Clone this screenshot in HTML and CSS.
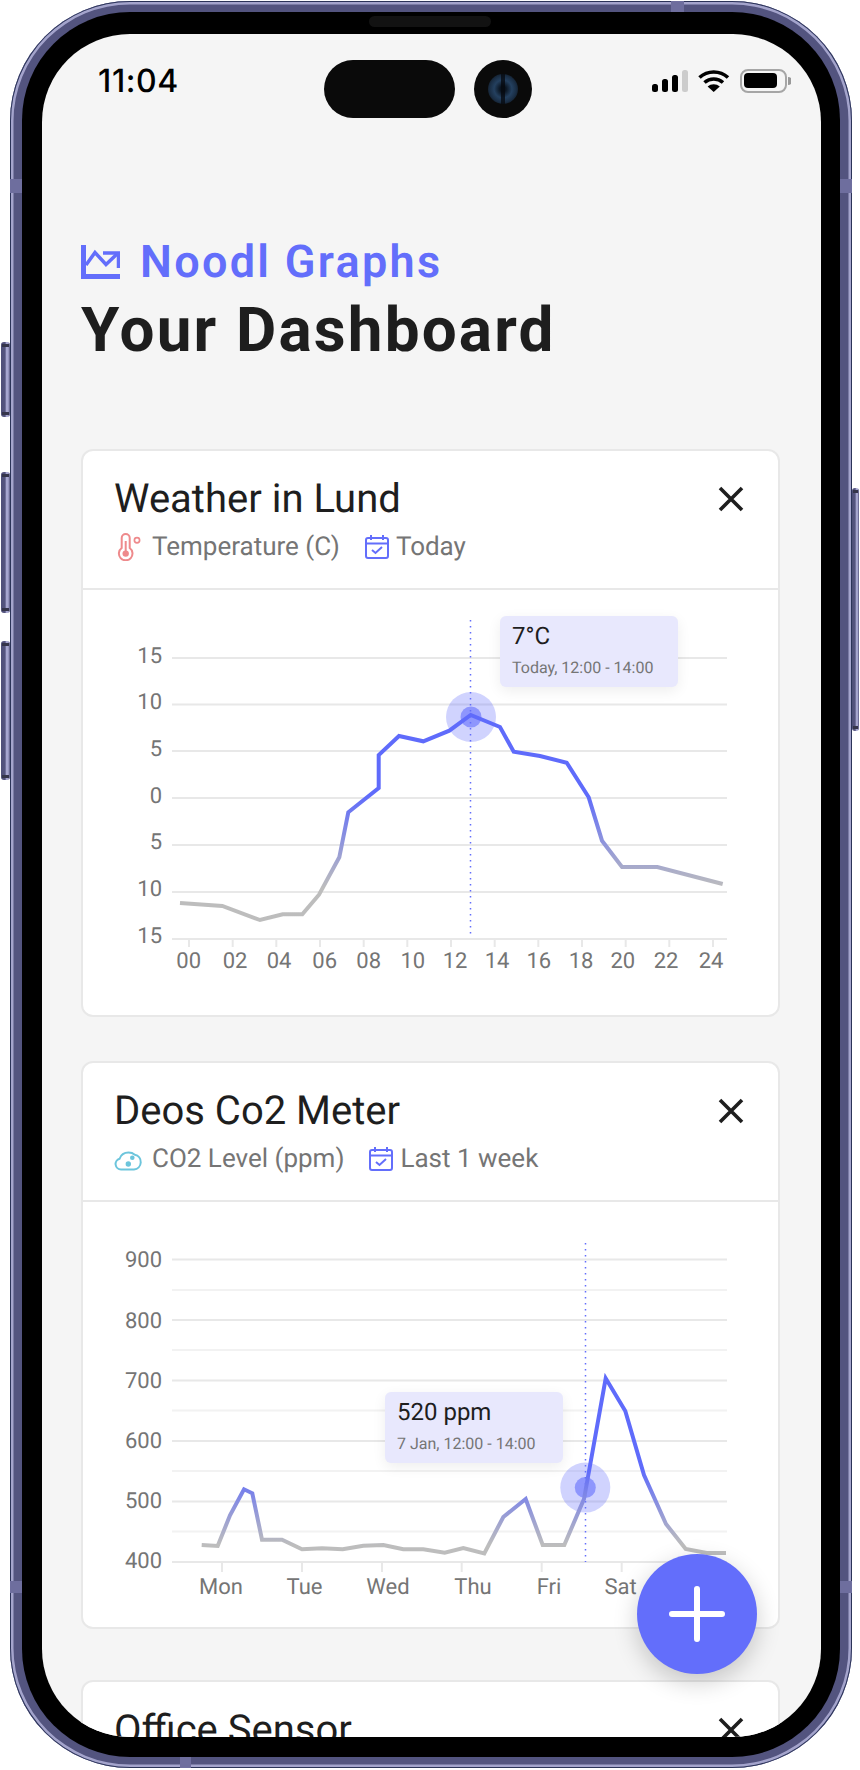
FILE: index.html
```html
<!DOCTYPE html>
<html lang="en">
<head>
<meta charset="utf-8">
<title>Noodl Graphs</title>
<link rel="stylesheet" href="styles.css">
</head>
<body>
<div class="phone">
  <span class="btn btn-mute"></span>
  <span class="btn btn-up"></span>
  <span class="btn btn-down"></span>
  <span class="btn btn-power"></span>
  <span class="band band-lt"></span>
  <span class="band band-rt"></span>
  <span class="band band-lb"></span>
  <span class="band band-rb"></span>
  <span class="band band-top"></span>
  <span class="band band-bottom"></span>
  <div class="bezel">
    <span class="speaker"></span>
    <div class="screen">
      <div class="island"><span class="pill"></span><span class="camera"><span class="lens"></span></span></div>
      <div class="status">
        <span class="time">11:04</span>
        <svg class="status-icons" width="139" height="24" viewBox="0 0 139 24">
          <rect x="0" y="15" width="6" height="8" rx="2.5" fill="#000"/>
          <rect x="10" y="10" width="6" height="13" rx="2.5" fill="#000"/>
          <rect x="20" y="6" width="6" height="17" rx="2.5" fill="#000"/>
          <rect x="30" y="1" width="6" height="22" rx="2.5" fill="#ccc"/>
          <path d="M47.5 8.5A21 21 0 0 1 76 8.5" fill="none" stroke="#000" stroke-width="3.6"/>
          <path d="M52.5 13.5A14 14 0 0 1 71 13.5" fill="none" stroke="#000" stroke-width="3.6"/>
          <path d="M61.7 23 55.6 17.6A9 9 0 0 1 67.8 17.6Z" fill="#000"/>
          <rect x="89" y="1" width="45" height="22" rx="7" fill="none" stroke="#a6a6a6" stroke-width="2"/>
          <rect x="92" y="4" width="33" height="15" rx="4" fill="#000"/>
          <path d="M136 8a4 4 0 0 1 0 8Z" fill="#999"/>
        </svg>
      </div>
      <header class="head">
        <div class="brand">
          <svg class="brand-icon" width="39" height="34" viewBox="0 0 39 34">
            <path d="M2.5 0V31.5H39" fill="none" stroke="#636efb" stroke-width="5"/>
            <path d="M5 20 14 7.5 25 19.5 36 9" fill="none" stroke="#636efb" stroke-width="3.5"/>
            <path d="M22 8H37.5V23" fill="none" stroke="#636efb" stroke-width="3.5"/>
          </svg>
          <span class="brand-name">Noodl Graphs</span>
        </div>
        <h1 class="page-title">Your Dashboard</h1>
      </header>

      <section class="card card-one">
        <div class="card-head">
          <div class="title-row">
            <h2 class="card-title">Weather in Lund</h2>
            <svg class="close" width="28" height="28" viewBox="0 0 28 28"><path d="M3 3 25 25M25 3 3 25" stroke="#1e1e1e" stroke-width="3.6" fill="none"/></svg>
          </div>
          <div class="meta">
            <span class="meta-item">
              <svg class="meta-icon" width="28" height="28" viewBox="0 0 28 28">
                <path d="M7.7 15V5a4 4 0 0 1 8 0V15a6.8 6.8 0 1 1-8 0Z" fill="none" stroke="#ee8a8c" stroke-width="2"/>
                <circle cx="11.7" cy="20.6" r="3.2" fill="#ee8a8c"/>
                <path d="M11.7 8V20" stroke="#ee8a8c" stroke-width="2"/>
                <circle cx="23" cy="7.3" r="2.6" fill="none" stroke="#ee8a8c" stroke-width="1.7"/>
              </svg>
              Temperature (C)
            </span>
            <span class="meta-item">
              <svg class="cal-icon" width="24" height="24" viewBox="0 0 24 24">
                <rect x="1" y="3" width="22" height="20" rx="2" fill="none" stroke="#636efb" stroke-width="2"/>
                <path d="M1 8.5H23M6 0V5M18 0V5" fill="none" stroke="#636efb" stroke-width="2"/>
                <path d="M7 15 10.5 18 17 12" fill="none" stroke="#636efb" stroke-width="2"/>
              </svg>
              Today
            </span>
          </div>
        </div>
        <div class="chart chart-one">
          <svg class="plot" width="695" height="426" viewBox="83 590 695 426">
            <defs>
              <linearGradient id="lineA" gradientUnits="userSpaceOnUse" x1="0" y1="795" x2="0" y2="888">
                <stop offset="0" stop-color="#5f6bfb"/><stop offset="1" stop-color="#bdbdbd"/>
              </linearGradient>
            </defs>
            <g class="grid">
              <path d="M172 658H727M172 704.5H727M172 751H727M172 798H727M172 845H727M172 892H727M172 939H727"/>
              <path d="M189 939v8M232.7 939v8M276.3 939v8M320 939v8M363.7 939v8M407.3 939v8M451 939v8M494.7 939v8M538.3 939v8M582 939v8M625.7 939v8M669.3 939v8M713 939v8"/>
            </g>
            <g class="axis axis-y">
              <text x="162" y="662.5">15</text><text x="162" y="709.3">10</text><text x="162" y="755.8">5</text><text x="162" y="802.7">0</text><text x="162" y="849.4">5</text><text x="162" y="896.2">10</text><text x="162" y="942.8">15</text>
            </g>
            <g class="axis axis-x">
              <text x="188.7" y="968">00</text><text x="235" y="968">02</text><text x="279" y="968">04</text><text x="324.7" y="968">06</text><text x="368.7" y="968">08</text><text x="412.8" y="968">10</text><text x="455" y="968">12</text><text x="497" y="968">14</text><text x="538.8" y="968">16</text><text x="581" y="968">18</text><text x="622.8" y="968">20</text><text x="666" y="968">22</text><text x="711" y="968">24</text>
            </g>
            <circle class="halo" cx="471" cy="717" r="25"/>
            <circle class="dot" cx="471" cy="717" r="10.5"/>
            <path class="cursor" d="M470.5 620V938"/>
            <polyline class="series" stroke="url(#lineA)" points="180,903 222.3,906 260,920 282.7,914.3 302.3,914.3 319,894.7 339.3,857.3 348.3,812.3 378.7,788 378.7,755 399,736 423.3,741.3 449.3,730.7 470.7,715 500,727 513.7,751.7 540,756 566.7,762.7 588.7,797.3 602,840.7 622,867 657.3,867 722.7,884"/>
          </svg>
          <div class="tip tip-one">
            <div class="tip-value">7°C</div>
            <div class="tip-when">Today, 12:00 - 14:00</div>
          </div>
        </div>
      </section>

      <section class="card card-two">
        <div class="card-head">
          <div class="title-row">
            <h2 class="card-title">Deos Co2 Meter</h2>
            <svg class="close" width="28" height="28" viewBox="0 0 28 28"><path d="M3 3 25 25M25 3 3 25" stroke="#1e1e1e" stroke-width="3.6" fill="none"/></svg>
          </div>
          <div class="meta">
            <span class="meta-item">
              <svg class="meta-icon" width="28" height="28" viewBox="0 0 28 28">
                <path d="M7 24.5a5.5 5.5 0 0 1-1.4-10.8C7 9.6 10.5 7.5 14.5 7.5c2.6 0 4.5.6 6.3 2.2a7.5 7.5 0 0 1-.8 14.800Z" fill="none" stroke="#6cc5dc" stroke-width="2"/>
                <circle cx="14.3" cy="19" r="2.7" fill="#6cc5dc"/>
                <circle cx="18.3" cy="12.7" r="2.3" fill="#6cc5dc"/>
              </svg>
              CO2 Level (ppm)
            </span>
            <span class="meta-item">
              <svg class="cal-icon" width="24" height="24" viewBox="0 0 24 24">
                <rect x="1" y="3" width="22" height="20" rx="2" fill="none" stroke="#636efb" stroke-width="2"/>
                <path d="M1 8.5H23M6 0V5M18 0V5" fill="none" stroke="#636efb" stroke-width="2"/>
                <path d="M7 15 10.5 18 17 12" fill="none" stroke="#636efb" stroke-width="2"/>
              </svg>
              Last 1 week
            </span>
          </div>
        </div>
        <div class="chart chart-two">
          <svg class="plot" width="695" height="425" viewBox="83 1202 695 425">
            <defs>
              <linearGradient id="lineB" gradientUnits="userSpaceOnUse" x1="0" y1="1470" x2="0" y2="1545">
                <stop offset="0" stop-color="#5f6bfb"/><stop offset="1" stop-color="#bdbdbd"/>
              </linearGradient>
            </defs>
            <g class="grid">
              <path d="M172 1259.5H727M172 1320H727M172 1380.5H727M172 1441H727M172 1501.5H727M172 1562H727"/>
              <path d="M222 1562v10M302 1562v10M382 1562v10M461.7 1562v10M541.7 1562v10M621.7 1562v10"/>
            </g>
            <g class="grid grid-soft">
              <path d="M172 1290H727M172 1350H727M172 1410.5H727M172 1471H727M172 1531.5H727"/>
            </g>
            <g class="axis axis-y">
              <text x="162" y="1267.3">900</text><text x="162" y="1327.7">800</text><text x="162" y="1387.8">700</text><text x="162" y="1448">600</text><text x="162" y="1508.2">500</text><text x="162" y="1568.4">400</text>
            </g>
            <g class="axis axis-x">
              <text x="221" y="1593.5">Mon</text><text x="304.5" y="1593.5">Tue</text><text x="388" y="1593.5">Wed</text><text x="473" y="1593.5">Thu</text><text x="549" y="1593.5">Fri</text><text x="620.5" y="1593.5">Sat</text>
            </g>
            <circle class="halo" cx="585.3" cy="1487.6" r="25"/>
            <circle class="dot" cx="585.3" cy="1487.6" r="10.5"/>
            <path class="cursor" d="M585.5 1243V1562"/>
            <polyline class="series" stroke="url(#lineB)" points="201.7,1545 217.7,1546 230,1515.3 244,1489.3 252.3,1493.3 262,1539.7 282,1539.7 302,1549.3 322,1548.3 342.7,1549.3 363.3,1545.7 383.3,1545 403.3,1549.3 423.3,1549.3 444.7,1552.7 463.3,1548 484.3,1553.4 503.3,1517 525.7,1499 542.7,1545 564.3,1545 584,1499 605.7,1378.3 625.3,1411 644,1475 666,1524 685.7,1549 706.7,1553 726,1553"/>
          </svg>
          <div class="tip tip-two">
            <div class="tip-value">520 ppm</div>
            <div class="tip-when">7 Jan, 12:00 - 14:00</div>
          </div>
        </div>
      </section>

      <section class="card card-three">
        <div class="card-head">
          <div class="title-row">
            <h2 class="card-title">Office Sensor</h2>
            <svg class="close" width="28" height="28" viewBox="0 0 28 28"><path d="M3 3 25 25M25 3 3 25" stroke="#1e1e1e" stroke-width="3.6" fill="none"/></svg>
          </div>
        </div>
      </section>

      <button class="fab" aria-label="Add">
        <svg width="56" height="56" viewBox="0 0 56 56"><path d="M28 3V53M3 28H53" stroke="#fff" stroke-width="6" stroke-linecap="round" fill="none"/></svg>
      </button>
    </div>
  </div>
</div>
</body>
</html>
```
FILE: styles.css
```css
* { box-sizing: border-box; }
html, body { margin: 0; padding: 0; background: #fff; }
body {
  width: 860px;
  height: 1770px;
  overflow: hidden;
  font-family: Roboto, "Liberation Sans", sans-serif;
  text-rendering: geometricPrecision;
}

.phone {
  position: relative;
  width: 842px;
  height: 1767px;
  margin: 1px 0 0 10px;
  padding: 11px 12px;
  border-radius: 120px;
  background: #53547f;
  box-shadow: inset 0 0 0 1px #2b3358, inset 0 0 0 3.5px #a4a4cc;
}
.bezel {
  position: relative;
  height: 100%;
  padding: 22px 19px 20px 20px;
  border-radius: 108px;
  background: #000;
}
.speaker {
  position: absolute;
  left: 347px;
  top: 4px;
  width: 122px;
  height: 11px;
  border-radius: 6px;
  background: #121212;
}
.screen {
  position: relative;
  height: 100%;
  overflow: hidden;
  border-radius: 88px;
  background: #f5f5f5;
}

.btn {
  position: absolute;
  width: 9px;
  border-radius: 3px;
  background: linear-gradient(90deg, #4e4f78 0, #55557f 45%, #a6a6cf 60%, #a6a6cf 78%, #55557f 100%);
}
.btn::before, .btn::after {
  content: "";
  position: absolute;
  left: 1px;
  right: 1px;
  height: 3px;
  background: #35354a;
}
.btn::before { top: 2px; }
.btn::after { bottom: 2px; }
.btn-mute { left: -9px; top: 341px; height: 75px; }
.btn-up { left: -9px; top: 471px; height: 141px; }
.btn-down { left: -9px; top: 640px; height: 139px; }
.btn-power { left: 842px; top: 487px; height: 243px; width: 7px; }

.band { position: absolute; background: #6e6e9e; }
.band-lt { left: 0; top: 178px; width: 12px; height: 14px; }
.band-rt { right: 0; top: 178px; width: 12px; height: 14px; }
.band-lb { left: 0; top: 1580px; width: 12px; height: 12px; }
.band-rb { right: 0; top: 1580px; width: 12px; height: 12px; }
.band-top { left: 661px; top: 0; width: 13px; height: 11px; }
.band-bottom { left: 170px; bottom: 0; width: 11px; height: 11px; }

.island {
  position: absolute;
  left: 282px;
  top: 26px;
  display: flex;
  gap: 19px;
}
.pill { width: 131px; height: 58px; border-radius: 29px; background: #0a0a0a; }
.camera {
  display: flex;
  align-items: center;
  justify-content: center;
  width: 58px;
  height: 58px;
  border-radius: 50%;
  background: #0a0a0a;
}
.lens {
  position: relative;
  width: 30px;
  height: 30px;
  border-radius: 50%;
  background: radial-gradient(circle, #0a1420 0, #0a1420 14%, #24405f 42%, #1a2e45 62%, #0a0a0a 92%);
}
.lens::after {
  content: "";
  position: absolute;
  left: 13px;
  top: 0;
  width: 4px;
  height: 30px;
  background: rgba(5, 8, 14, 0.75);
}

.status {
  display: flex;
  justify-content: space-between;
  height: 59px;
  padding: 35px 30px 0 56px;
}
.time {
  font-family: Inter, Roboto, sans-serif;
  font-size: 32px;
  font-weight: 500;
  letter-spacing: 0.6px;
  line-height: 24px;
  color: #000;
}
.status-icons { display: block; }

.head { margin: 143px 0 0 39px; }
.brand { display: flex; align-items: center; gap: 20px; height: 52px; }
.brand-icon { display: block; flex: none; }
.brand-name {
  font-size: 45px;
  font-weight: 600;
  letter-spacing: 2.3px;
  line-height: 52px;
  color: #636efb;
}
.page-title {
  margin: 7px 0 0;
  font-size: 62px;
  font-weight: 700;
  letter-spacing: 2.15px;
  line-height: 72px;
  color: #1e1e1e;
}

.card {
  width: 699px;
  margin-left: 39px;
  border: 2px solid #e8e8e8;
  border-radius: 12px;
  background: #fff;
}
.card-one { margin-top: 82px; height: 568px; }
.card-two { margin-top: 44px; height: 568px; }
.card-three { margin-top: 51px; height: 200px; }

.card-head {
  padding: 24px 33px 25px 31px;
  border-bottom: 2px solid #e8e8e8;
}
.title-row { display: flex; align-items: center; justify-content: space-between; }
.card-title { margin: 0; font-size: 40px; font-weight: 400; line-height: 48px; color: #1e1e1e; }
.close { display: block; flex: none; }

.meta { display: flex; gap: 25px; margin-top: 8px; }
.meta-item {
  display: flex;
  align-items: center;
  font-size: 26px;
  line-height: 32px;
  color: #757575;
}
.meta-icon { display: block; margin-right: 10px; }
.cal-icon { display: block; margin-right: 7px; }

.chart { position: relative; }
.plot { display: block; }
.grid path { fill: none; stroke: #e8e8e8; stroke-width: 2; }
.grid-soft path { stroke: #f2f2f2; }
.axis text { font-family: Roboto, sans-serif; font-size: 22px; fill: #757575; }
.axis-y text { text-anchor: end; }
.axis-x text { text-anchor: middle; }
.cursor { fill: none; stroke: #636efb; stroke-width: 1.5; stroke-dasharray: 1.5 4.5; }
.series { fill: none; stroke-width: 4; stroke-linejoin: miter; }
.halo { fill: #636efb; fill-opacity: 0.3; }
.dot { fill: #636efb; fill-opacity: 0.6; }

.tip {
  position: absolute;
  width: 178px;
  height: 71px;
  padding: 5px 12px;
  border-radius: 6px;
  background: #e8e8fd;
  box-shadow: 0 4px 14px rgba(0, 0, 0, 0.07);
}
.tip-one { left: 417px; top: 26px; }
.tip-two { left: 302px; top: 190px; }
.tip-value { font-size: 24px; line-height: 30px; color: #1e1e1e; }
.tip-when { margin-top: 6px; font-size: 16px; line-height: 22px; color: #757575; }

.fab {
  position: absolute;
  left: 595px;
  top: 1520px;
  display: flex;
  align-items: center;
  justify-content: center;
  width: 120px;
  height: 120px;
  padding: 0;
  border: 0;
  border-radius: 50%;
  background: #636efb;
  box-shadow: 0 8px 24px rgba(0, 0, 0, 0.2);
}
```
